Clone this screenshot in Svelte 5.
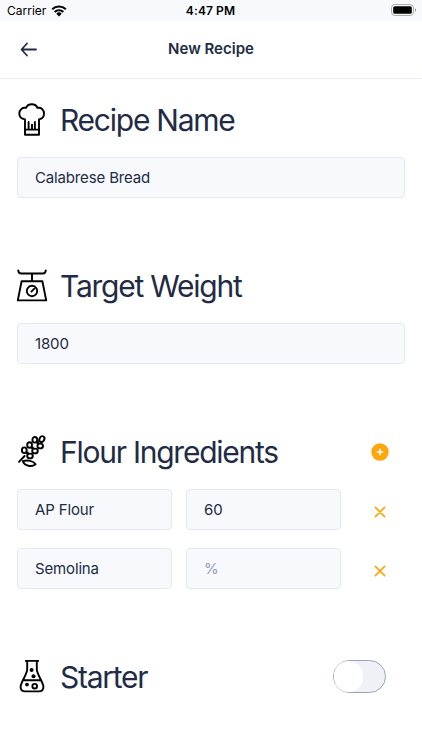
<script lang="ts">
  interface Flour {
    name: string;
    percent: string;
  }

  let recipeName = $state('Calabrese Bread');
  let targetWeight = $state('1800');
  let flours = $state<Flour[]>([
    { name: 'AP Flour', percent: '60' },
    { name: 'Semolina', percent: '' },
  ]);
  let hasStarter = $state(false);

  function addFlour() {
    flours.push({ name: '', percent: '' });
  }

  function removeFlour(index: number) {
    flours.splice(index, 1);
  }
</script>

<div class="screen">
  <div class="status-bar">
    <div class="carrier">
      <span>Carrier</span>
      <svg width="16" height="12" viewBox="0 0 16 12">
        <path d="M1.2 4.3a9.7 9.7 0 0 1 13.6 0M3.7 7a6.1 6.1 0 0 1 8.6 0" fill="none" stroke="#000" stroke-width="2.1" />
        <path d="M5.3 8.7a3.8 3.8 0 0 1 5.4 0L8 11.6z" />
      </svg>
    </div>
    <span class="time">4:47 PM</span>
    <svg class="battery" width="26" height="12" viewBox="0 0 26 12">
      <rect x="0.6" y="0.6" width="21.8" height="10.8" rx="3" fill="#fff" stroke="#a3a4a6" />
      <rect x="2.2" y="2.2" width="18.6" height="7.6" rx="1.6" />
      <path d="M24 4.2c1.4.6 1.4 3 0 3.6z" fill="#8c8d8f" />
    </svg>
  </div>

  <header>
    <button class="back" aria-label="Back">
      <svg width="18" height="16" viewBox="0 0 18 16">
        <path d="M16 8.5H2M7 2.5l-5.5 6 5.5 6" />
      </svg>
    </button>
    <h1>New Recipe</h1>
  </header>

  <main>
    <section>
      <div class="heading">
        <svg class="icon" viewBox="0 0 34 36">
          <path d="M10 32.7V17.4C6 17 4.3 14.5 4.3 11.6c0-4 3.2-6.6 6.8-5.7C12 3.3 14 2.3 16.8 2.3s4.6 1 5.6 3.6c3.6-.9 6.6 1.7 6.6 5.7 0 2.9-1.6 5.4-5 5.8v15.3z" />
          <path d="M10 27.6h14M13.6 27V20M17 27v-4.4M19.9 27V20" />
        </svg>
        <h2>Recipe Name</h2>
      </div>
      <input bind:value={recipeName} aria-label="Recipe name" />
    </section>

    <section>
      <div class="heading">
        <svg class="icon" viewBox="0 0 34 36">
          <path d="M3.2 2.4c.2 2 1 3.1 3 3.1h21.6c2 0 2.8-1.1 3-3.1M17 5.5v7.8M6.6 13.3h20.8l3.8 19.1H2.8z" />
          <circle cx="17" cy="23" r="5.2" />
          <path d="m16.4 23.6 2.9-2.9" />
        </svg>
        <h2>Target Weight</h2>
      </div>
      <input bind:value={targetWeight} aria-label="Target weight" />
    </section>

    <section class="flours">
      <div class="heading">
        <svg class="icon" viewBox="0 0 34 36">
          <ellipse cx="26.9" cy="5.1" rx="2.4" ry="3" transform="rotate(30 26.9 5.1)" />
          <ellipse cx="19.8" cy="5.8" rx="2.4" ry="2.8" />
          <ellipse cx="14.6" cy="11" rx="2.4" ry="2.8" />
          <ellipse cx="9.3" cy="16.2" rx="2.4" ry="2.8" />
          <ellipse cx="25.2" cy="12" rx="2.8" ry="2.4" />
          <ellipse cx="20" cy="17" rx="2.8" ry="2.4" />
          <ellipse cx="15" cy="22" rx="2.8" ry="2.4" />
          <path d="m4 27.8 5.6-5.8M22.2 9.2l1.4-1.4M17 14.4l1-1M11.9 19.5l1-1" />
          <path d="M7.8 27.2c4.4-1.4 10.6-.6 12.8 3-3.8 3-10.8 2.2-12.8-3z" />
        </svg>
        <h2>Flour Ingredients</h2>
        <button class="add" aria-label="Add flour" onclick={addFlour}>
          <svg width="18" height="18" viewBox="0 0 18 18">
            <circle cx="9" cy="9" r="8.7" fill="#ffa60a" />
            <path d="M9 5.8v6.4M5.8 9h6.4" stroke="#fff" stroke-width="1.7" />
          </svg>
        </button>
      </div>
      {#each flours as flour, i}
        <div class="row">
          <input bind:value={flour.name} placeholder="Name" />
          <input bind:value={flour.percent} placeholder="%" />
          <button class="remove" aria-label="Remove flour" onclick={() => removeFlour(i)}>
            <svg width="12" height="12" viewBox="0 0 12 12">
              <path d="m1.4 1.4 9.2 9.2M10.6 1.4l-9.2 9.2" />
            </svg>
          </button>
        </div>
      {/each}
    </section>

    <section>
      <div class="heading">
        <svg class="icon" viewBox="0 0 34 36">
          <path d="M10.8 1.9h12.4M12.2 2v8.2c0 5-6.3 12.5-6.6 17.6-.1 3 1.6 4.6 4.4 4.6h14c2.8 0 4.5-1.6 4.4-4.6-.3-5.1-6.6-12.6-6.6-17.6V2M8 21.2h18" />
          <circle cx="19.7" cy="27.2" r="2.3" />
          <g class="bubbles">
            <circle cx="16.6" cy="11" r="2" />
            <circle cx="18.5" cy="17.3" r="2" />
            <circle cx="12" cy="25.6" r="1.9" />
          </g>
        </svg>
        <h2>Starter</h2>
        <button
          class="switch"
          class:on={hasStarter}
          role="switch"
          aria-checked={hasStarter}
          aria-label="Starter"
          onclick={() => (hasStarter = !hasStarter)}
        >
          <span class="thumb"></span>
        </button>
      </div>
    </section>
  </main>
</div>

<style>
  .screen {
    width: 422px;
    height: 750px;
    overflow: hidden;
    background: #fff;
    color: #222b45;
    font-family: Inter, 'Liberation Sans', sans-serif;
  }

  button {
    display: flex;
    padding: 0;
    border: 0;
    background: none;
    cursor: pointer;
  }

  .status-bar {
    display: grid;
    grid-template-columns: 1fr auto 1fr;
    align-items: center;
    box-sizing: border-box;
    height: 21px;
    padding: 0 5px 0 7px;
    background: #f7f9fd;
    color: #000;
    font-size: 12px;
  }

  .carrier {
    display: flex;
    align-items: center;
    gap: 5px;
  }

  .time {
    margin-right: 3px;
    font-weight: 600;
    letter-spacing: 0.1px;
  }

  .battery {
    justify-self: end;
    margin-bottom: 1px;
  }

  header {
    display: grid;
    grid-template-columns: 1fr auto 1fr;
    align-items: center;
    box-sizing: border-box;
    height: 58px;
    padding: 0 20px 2px;
    border-bottom: 1px solid #edf0f6;
  }

  .back path {
    fill: none;
    stroke: #222b45;
    stroke-width: 1.8;
    stroke-linecap: round;
    stroke-linejoin: round;
  }

  h1 {
    margin: 0;
    font-size: 15px;
    font-weight: 600;
  }

  main {
    display: flex;
    flex-direction: column;
    gap: 70px;
    padding: 23px 17px 0;
  }

  .heading {
    display: flex;
    align-items: center;
    height: 36px;
    margin-left: -2px;
  }

  .icon {
    flex: none;
    width: 34px;
    height: 36px;
    margin-right: 11px;
    fill: none;
    stroke: #000;
    stroke-width: 1.9;
    stroke-linecap: round;
    stroke-linejoin: round;
  }

  .bubbles {
    fill: #000;
    stroke: none;
  }

  h2 {
    flex: 1;
    margin: 0;
    font-size: 30px;
    font-weight: 400;
    line-height: 36px;
    letter-spacing: -1.25px;
    white-space: nowrap;
  }

  input {
    box-sizing: border-box;
    width: 388px;
    height: 41px;
    margin: 0;
    padding: 0 17px;
    border: 1px solid #e4e9f2;
    border-radius: 4px;
    outline: none;
    background: #f7f9fc;
    color: #222b45;
    font: 400 15px Inter, 'Liberation Sans', sans-serif;
    letter-spacing: -0.15px;
  }

  input::placeholder {
    color: #8f9bb3;
    opacity: 1;
  }

  section > input {
    display: block;
    margin-top: 19px;
  }

  .flours {
    display: flex;
    flex-direction: column;
    gap: 18px;
  }

  .heading + .row {
    margin-top: 1px;
  }

  .row {
    display: flex;
    align-items: center;
  }

  .row input {
    width: 155px;
    margin-right: 14px;
  }

  .add {
    margin: 0 16px 1px 0;
  }

  .remove {
    margin: 4px 0 0 19px;
  }

  .remove path {
    stroke: #ffa60a;
    stroke-width: 1.7;
    stroke-linecap: round;
  }

  .switch {
    box-sizing: border-box;
    width: 53px;
    height: 33px;
    margin: 0 19px 1px 0;
    border: 1px solid #9ba3b8;
    border-radius: 17px;
    background: #eff1f6;
  }

  .thumb {
    width: 29px;
    height: 31px;
    border-radius: 16px;
    background: #fff;
  }

  .on {
    justify-content: flex-end;
    background: #ffa60a;
  }
</style>
